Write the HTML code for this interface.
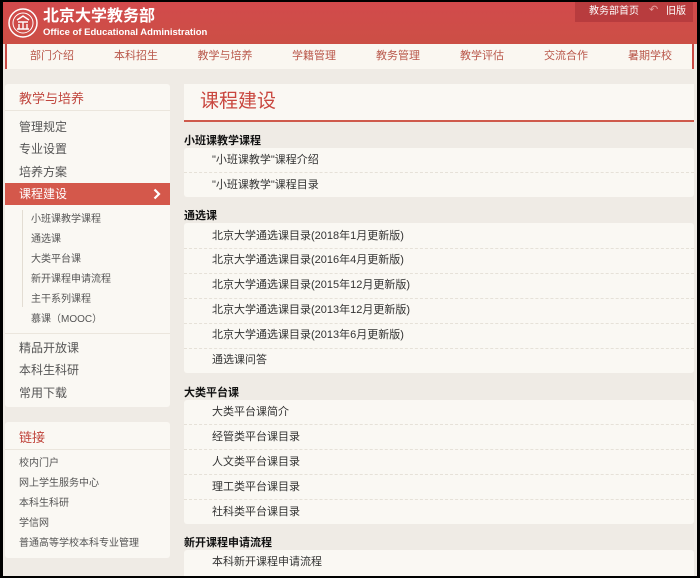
<!DOCTYPE html><html><head><meta charset="utf-8"><style>
*{margin:0;padding:0;box-sizing:border-box}
body{width:700px;height:578px;background:#000;font-family:"Liberation Sans","Noto Sans CJK SC",sans-serif;position:relative;overflow:hidden}
.pg{position:absolute;left:3px;top:2px;width:694px;height:574px;background:#efebe5;overflow:hidden}
.hd{position:absolute;left:0;top:0;width:694px;height:42px;background:linear-gradient(#d24a4c,#cc4f45)}
.nav{position:absolute;left:2px;top:42px;width:689px;height:25px;background:#faf7f1;border-left:2px solid #c94a45;border-right:2px solid #c94a45}
.nav span{position:absolute;top:6px;font-size:11px;line-height:13px;color:#b9574a;transform:translateX(-50%);white-space:nowrap}
.t{position:absolute;white-space:nowrap;line-height:1.2}
.box{position:absolute;background:#faf8f3;border-radius:3px}
.sb{font-size:12px;color:#555}
.mi{position:absolute;left:28px;font-size:11px;color:#333;white-space:nowrap;line-height:13px}
.sep{position:absolute;left:0;right:0;border-top:1px dashed #e6e1d8}
.h{position:absolute;left:181px;font-size:11px;font-weight:bold;color:#111;line-height:13px}
</style></head><body><div class="pg">
<div class="hd">
<svg style="position:absolute;left:5px;top:6px" width="30" height="30" viewBox="0 0 30 30"><circle cx="15" cy="15" r="14" fill="none" stroke="#fff" stroke-width="1.5"/><circle cx="15" cy="15" r="10" fill="none" stroke="#fff" stroke-width="1"/><path d="M9 12 L15 8 L21 12 M10 14h10 M11 16v5 M15 14v7 M19 16v5 M9 21h12" stroke="#fff" stroke-width="1.4" fill="none"/></svg>
<div class="t" style="left:40px;top:6px;font-size:16px;line-height:18px;font-weight:bold;color:#fff">北京大学教务部</div>
<div class="t" style="left:40px;top:25px;font-size:9.5px;line-height:11px;font-weight:bold;color:#fff">Office of Educational Administration</div>
<div style="position:absolute;left:572px;top:0;width:118px;height:20px;background:#b83c3e"></div>
<div class="t" style="left:586px;top:4px;font-size:10px;color:#fff">教务部首页</div>
<div class="t" style="left:646px;top:2px;font-size:11px;color:#e8a0a0">↶</div>
<div class="t" style="left:663px;top:4px;font-size:10px;color:#fff">旧版</div>
</div>
<div class="nav"><span style="left:45px">部门介绍</span><span style="left:129px">本科招生</span><span style="left:218px">教学与培养</span><span style="left:307px">学籍管理</span><span style="left:391px">教务管理</span><span style="left:475px">教学评估</span><span style="left:559px">交流合作</span><span style="left:643px">暑期学校</span></div>

<div class="box" style="left:2px;top:82px;width:165px;height:323px"></div>
<div class="t" style="left:16px;top:89px;font-size:13px;color:#c0453d">教学与培养</div>
<div style="position:absolute;left:2px;top:108px;width:165px;border-top:1px solid #ebe6dd"></div>
<div class="t sb" style="left:16px;top:118px">管理规定</div>
<div class="t sb" style="left:16px;top:140px">专业设置</div>
<div class="t sb" style="left:16px;top:163px">培养方案</div>
<div style="position:absolute;left:2px;top:181px;width:165px;height:22px;background:#d4584b"></div>
<div class="t" style="left:16px;top:185px;font-size:12px;color:#fff">课程建设</div>
<svg style="position:absolute;left:150px;top:186px" width="8" height="12" viewBox="0 0 8 12"><path d="M1.5 1.5 L6 6 L1.5 10.5" stroke="#fff" stroke-width="2.2" fill="none"/></svg>
<div style="position:absolute;left:19px;top:208px;height:97px;border-left:1px solid #e3ddd3"></div>
<div class="t" style="left:28px;top:212px;font-size:10px;color:#555">小班课教学课程</div>
<div class="t" style="left:28px;top:232px;font-size:10px;color:#555">通选课</div>
<div class="t" style="left:28px;top:252px;font-size:10px;color:#555">大类平台课</div>
<div class="t" style="left:28px;top:272px;font-size:10px;color:#555">新开课程申请流程</div>
<div class="t" style="left:28px;top:292px;font-size:10px;color:#555">主干系列课程</div>
<div class="t" style="left:28px;top:312px;font-size:10px;color:#555">慕课（MOOC）</div>
<div style="position:absolute;left:2px;top:331px;width:165px;border-top:1px solid #ebe6dd"></div>
<div class="t sb" style="left:16px;top:339px">精品开放课</div>
<div class="t sb" style="left:16px;top:361px">本科生科研</div>
<div class="t sb" style="left:16px;top:384px">常用下载</div>

<div class="box" style="left:2px;top:420px;width:165px;height:136px"></div>
<div class="t" style="left:16px;top:428px;font-size:13px;color:#c0453d">链接</div>
<div style="position:absolute;left:2px;top:447px;width:165px;border-top:1px solid #ebe6dd"></div>
<div class="t" style="left:16px;top:456px;font-size:10px;color:#555">校内门户</div>
<div class="t" style="left:16px;top:476px;font-size:10px;color:#555">网上学生服务中心</div>
<div class="t" style="left:16px;top:496px;font-size:10px;color:#555">本科生科研</div>
<div class="t" style="left:16px;top:516px;font-size:10px;color:#555">学信网</div>
<div class="t" style="left:16px;top:536px;font-size:10px;color:#555">普通高等学校本科专业管理</div>

<div class="box" style="left:181px;top:82px;width:510px;height:38px;border-bottom:2px solid #cf5a4c;border-radius:0"></div>
<div class="t" style="left:197px;top:89px;font-size:19px;color:#c9473f">课程建设</div>

<div class="h" style="top:133px">小班课教学课程</div>
<div class="box" style="left:181px;top:146px;width:510px;height:49px">
<div class="mi" style="top:6px">"小班课教学"课程介绍</div><div class="sep" style="top:24px"></div>
<div class="mi" style="top:31px">"小班课教学"课程目录</div></div>

<div class="h" style="top:208px">通选课</div>
<div class="box" style="left:181px;top:221px;width:510px;height:150px">
<div class="mi" style="top:7px">北京大学通选课目录(2018年1月更新版)</div><div class="sep" style="top:25px"></div>
<div class="mi" style="top:31px">北京大学通选课目录(2016年4月更新版)</div><div class="sep" style="top:50px"></div>
<div class="mi" style="top:56px">北京大学通选课目录(2015年12月更新版)</div><div class="sep" style="top:75px"></div>
<div class="mi" style="top:81px">北京大学通选课目录(2013年12月更新版)</div><div class="sep" style="top:100px"></div>
<div class="mi" style="top:106px">北京大学通选课目录(2013年6月更新版)</div><div class="sep" style="top:125px"></div>
<div class="mi" style="top:131px">通选课问答</div></div>

<div class="h" style="top:385px">大类平台课</div>
<div class="box" style="left:181px;top:398px;width:510px;height:124px">
<div class="mi" style="top:6px">大类平台课简介</div><div class="sep" style="top:24px"></div>
<div class="mi" style="top:31px">经管类平台课目录</div><div class="sep" style="top:49px"></div>
<div class="mi" style="top:56px">人文类平台课目录</div><div class="sep" style="top:74px"></div>
<div class="mi" style="top:81px">理工类平台课目录</div><div class="sep" style="top:99px"></div>
<div class="mi" style="top:106px">社科类平台课目录</div></div>

<div class="h" style="top:535px">新开课程申请流程</div>
<div class="box" style="left:181px;top:548px;width:510px;height:30px">
<div class="mi" style="top:6px">本科新开课程申请流程</div></div>
</div></body></html>
